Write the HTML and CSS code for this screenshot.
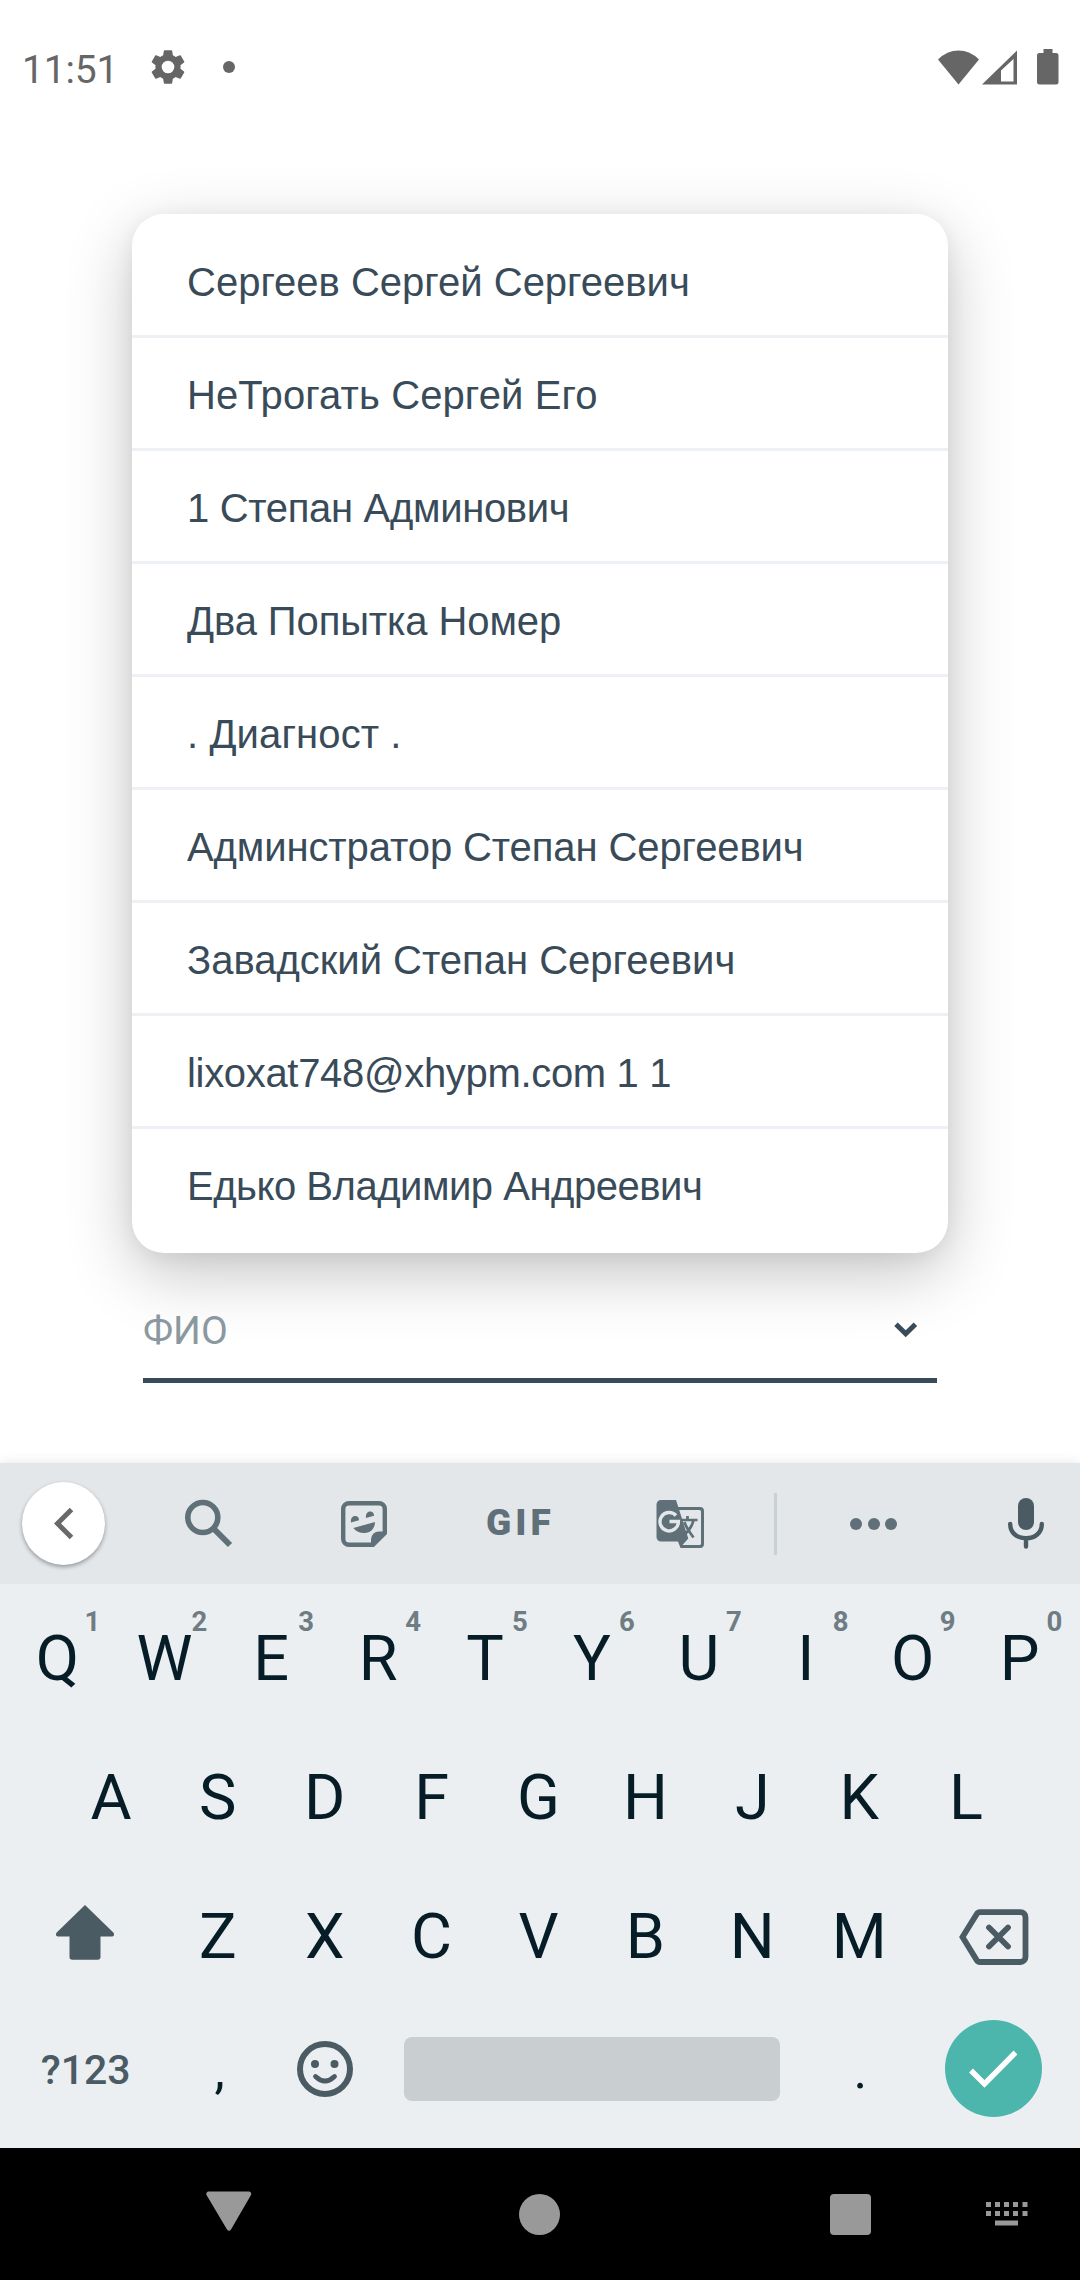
FILE: index.html
```html
<!DOCTYPE html>
<html lang="ru">
<head>
<meta charset="utf-8">
<title>ФИО</title>
<link rel="stylesheet" href="styles.css">
</head>
<body>
<header class="status">
  <span class="clock">11:51</span>
  <svg class="gear" width="42" height="42" viewBox="0 0 24 24"><path d="M19.14 12.94c.04-.3.06-.61.06-.94 0-.32-.02-.64-.07-.94l2.03-1.58a.49.49 0 0 0 .12-.61l-1.92-3.32a.488.488 0 0 0-.59-.22l-2.39.96c-.5-.38-1.03-.7-1.62-.94l-.36-2.54a.484.484 0 0 0-.48-.41h-3.84c-.24 0-.43.17-.47.41l-.36 2.54c-.59.24-1.13.57-1.62.94l-2.39-.96c-.22-.08-.47 0-.59.22L2.74 8.87c-.12.21-.08.47.12.61l2.03 1.58c-.05.3-.09.63-.09.94s.02.64.07.94l-2.03 1.58a.49.49 0 0 0-.12.61l1.92 3.32c.12.22.37.29.59.22l2.39-.96c.5.38 1.03.7 1.62.94l.36 2.54c.05.24.24.41.48.41h3.84c.24 0 .44-.17.47-.41l.36-2.54c.59-.24 1.13-.56 1.62-.94l2.39.96c.22.08.47 0 .59-.22l1.92-3.32c.12-.22.07-.47-.12-.61zM12 15.6A3.6 3.6 0 1 1 12 8.400a3.600 3.600 0 0 1 0 7.200z"/></svg>
  <span class="dot"></span>
  <svg class="wifi" width="42" height="35" viewBox="0 0 42 35"><path d="M0 9.500Q9 .5 20.500 .5T41 9.500L20.500 34.500z"/></svg>
  <svg class="signal" width="36" height="35" viewBox="0 0 36 35"><path fill-rule="evenodd" d="M0 34.500L35 .5v34zM19 20.500V31.500H31.500V9z"/></svg>
  <svg class="battery" width="22" height="36" viewBox="0 0 22 36"><path d="M6.500 0h9v4H19a2.500 2.500 0 0 1 2.500 2.500v26.500a2.500 2.500 0 0 1-2.500 2.500H2.500A2.500 2.500 0 0 1 0 33V6.500A2.500 2.500 0 0 1 2.500 4h4z"/></svg>
</header>

<main class="page">
  <ul class="options">
    <li class="option">Сергеев Сергей Сергеевич</li>
    <li class="option loose">НеТрогать Сергей Его</li>
    <li class="option tight">1 Степан Админович</li>
    <li class="option snug">Два Попытка Номер</li>
    <li class="option loose">. Диагност .</li>
    <li class="option snug">Админстратор Степан Сергеевич</li>
    <li class="option">Завадский Степан Сергеевич</li>
    <li class="option tight">lixoxat748@xhypm.com 1 1</li>
    <li class="option tighter">Едько Владимир Андреевич</li>
  </ul>
  <div class="field">
    <span class="placeholder">ФИО</span>
    <svg class="caret" width="24" height="16" viewBox="0 0 24 16"><path d="M2 2.200l9.700 9.600L21.400 2.200" fill="none" stroke="#394b59" stroke-width="5"/></svg>
  </div>
</main>

<section class="keyboard">
  <div class="tools">
    <span class="back"><svg width="20" height="33" viewBox="0 0 20 33"><path d="M17.500 2.500L3.500 16.500l14 14" fill="none" stroke="#6b6868" stroke-width="5"/></svg></span>
    <svg class="search" width="48" height="49" viewBox="0 0 48 49"><g fill="none" stroke="#5f7078"><circle cx="17.800" cy="18.500" r="15" stroke-width="5.600"/><path d="M28 29L45 46" stroke-width="6"/><path d="M29.500 33.500l3-3" stroke-width="4"/></g></svg>
    <svg class="sticker" width="46" height="46" viewBox="0 0 46 46"><path d="M8 2.200H38a5.800 5.800 0 0 1 5.800 5.800V32L32 43.800H8A5.800 5.800 0 0 1 2.200 38V8A5.800 5.800 0 0 1 8 2.200z" fill="none" stroke="#5f7078" stroke-width="4.400"/><path d="M30 44v-5.500a8 8 0 0 1 8-8h6v2L32.500 44zM10 21.500c-.5-3.500 1-6.500 4-6.500s4 2 4 4.200zM25 17c-.5-3.500 1-6.500 4-6.500s4 2 4 4.200zM12.300 27L34 21c0 6-4 11-10.500 11-5 0-9-2-11.200-5z"/></svg>
    <span class="gif">GIF</span>
    <svg class="translate" width="48" height="48" viewBox="0 0 48 48"><path d="M5 0H20L22.300 7H44a4 4 0 0 1 4 4V44a4 4 0 0 1-4 4H24.500L22 41.500H5A4.500 4.500 0 0 1 .5 37V4.500A4.500 4.500 0 0 1 5 0z"/><path d="M23.200 10H43.500a1.500 1.500 0 0 1 1.500 1.500v32a1.500 1.500 0 0 1-1.500 1.500H26.500l5.800-6.500z" fill="#e3e7ea"/><path d="M26 20H41.500M31.500 16v4M37.500 20c-1.500 7-5 11-8.500 14M28.500 22c1.500 5.500 5 10 9 15.500" fill="none" stroke="#5f7078" stroke-width="2.700"/><path d="M20 15.500A9.200 9.200 0 1 0 22.400 21.500H13.500" fill="none" stroke="#e3e7ea" stroke-width="3.400"/></svg>
    <span class="rule"></span>
    <span class="more"><i></i><i></i><i></i></span>
    <svg class="mic" width="36" height="51" viewBox="0 0 36 51"><rect x="10" y="0" width="16" height="32" rx="8" fill="#4b5b63"/><path d="M2.200 26c0 9 7 14.300 15.800 14.300S33.800 35 33.800 26M18 41v7.500" fill="none" stroke="#4b5b63" stroke-width="4.400" stroke-linecap="round"/></svg>
  </div>
  <div class="keys">
    <div class="row">
      <span class="key">Q<sup>1</sup></span><span class="key">W<sup>2</sup></span><span class="key">E<sup>3</sup></span><span class="key">R<sup>4</sup></span><span class="key">T<sup>5</sup></span><span class="key">Y<sup>6</sup></span><span class="key">U<sup>7</sup></span><span class="key">I<sup>8</sup></span><span class="key">O<sup>9</sup></span><span class="key">P<sup>0</sup></span>
    </div>
    <div class="row">
      <span class="key">A</span><span class="key">S</span><span class="key">D</span><span class="key">F</span><span class="key">G</span><span class="key">H</span><span class="key">J</span><span class="key">K</span><span class="key">L</span>
    </div>
    <div class="row">
      <span class="key wide"><svg class="shift" width="58" height="55" viewBox="0 0 58 55"><path d="M29 0L57.300 27.500c1.500 2 .7 4-1.800 4H44.500V52a2.700 2.700 0 0 1-2.700 2.700H16.200a2.700 2.700 0 0 1-2.700-2.700V31.500H2.500C0 31.500-.8 29.500.7 27.500z"/></svg></span><span class="key">Z</span><span class="key">X</span><span class="key">C</span><span class="key">V</span><span class="key">B</span><span class="key">N</span><span class="key">M</span><span class="key wide"><svg width="70" height="56" viewBox="0 0 70 56"><g fill="none" stroke="#4b5b63" stroke-width="5.800"><path d="M21 3.200H61.500a5 5 0 0 1 5 5V48a5 5 0 0 1-5 5H21a4 4 0 0 1-3.400-2L3.500 28 17.600 5.200A4 4 0 0 1 21 3.200z"/><path d="M30 18.500L49 37.500M49 18.500L30 37.500" stroke-linecap="round"/></g></svg></span>
    </div>
    <div class="row bottom">
      <span class="key wide symbols">?123</span>
      <span class="key punct">,</span>
      <span class="key"><svg width="56" height="56" viewBox="0 0 56 56"><circle cx="28" cy="28" r="25" fill="none" stroke="#4b5b63" stroke-width="6"/><circle cx="18" cy="23" r="4"/><circle cx="37.500" cy="23" r="4"/><path d="M18.500 35.500q9.500 9 19 0" fill="none" stroke="#4b5b63" stroke-width="4.800" stroke-linecap="round"/></svg></span>
      <span class="space"></span>
      <span class="key punct">.</span>
      <span class="key wide"><span class="enter"><svg width="49" height="38" viewBox="0 0 49 38"><path d="M2 20.500L15.500 34 46.500 2.500" fill="none" stroke="#fff" stroke-width="5.400"/></svg></span></span>
    </div>
  </div>
</section>

<nav class="nav">
  <svg class="nav-back" width="46" height="41" viewBox="0 0 46 41"><path d="M3 .5H42.500a2.500 2.500 0 0 1 2.200 4L25 38.500q-2 2.500-4 0L.8 4.500A2.500 2.500 0 0 1 3 .5z"/></svg>
  <span class="home"></span>
  <span class="recent"></span>
  <svg class="ime" width="42" height="24" viewBox="0 0 42 24"><path d="M0 0h5v5H0zM9 0h5v5H9zM18 0h5v5h-5zM27 0h5v5h-5zM36.500 0h5v5h-5zM0 9h5v5H0zM9 9h5v5H9zM18 9h5v5h-5zM27 9h5v5h-5zM36.500 9h5v5h-5zM9 18.500h23v5H9z"/></svg>
</nav>
</body>
</html>
```

FILE: styles.css
```css
* { box-sizing: border-box; }

body {
  margin: 0;
  width: 1080px;
  height: 2280px;
  display: flex;
  flex-direction: column;
  overflow: hidden;
  background: #fff;
  font-family: Roboto, "Noto Sans", sans-serif;
}

svg { display: block; flex: none; }

/* Status bar */
.status {
  display: flex;
  align-items: center;
  height: 134px;
  padding: 0 21px 0 22px;
  color: #666;
  fill: #666;
}
.clock {
  width: 96px;
  font-size: 39px;
  line-height: 40px;
  padding-top: 5px;
  letter-spacing: -.2px;
}
.gear { margin-left: 29px; }
.dot {
  width: 12px;
  height: 12px;
  margin-left: 34px;
  border-radius: 50%;
  background: #666;
}
.wifi { margin-left: auto; }
.signal { margin-left: 2px; }
.battery { margin-left: 19px; }

/* Suggestions and field */
.page {
  height: 1329px;
  padding: 80px 132px 0;
}
.options {
  margin: 0;
  padding: 11px 0 14px;
  list-style: none;
  border-radius: 32px;
  background: #fff;
  box-shadow: 0 20px 66px rgba(0, 0, 0, .23), 0 4px 20px rgba(0, 0, 0, .06);
}
.option {
  padding: 4px 0 0 55px;
  border-bottom: 3px solid #edf1f5;
  color: #394b59;
  font: 40px/106px "Liberation Sans", Arial, sans-serif;
  white-space: nowrap;
}
.option:last-child { border-bottom: 0; }
.loose { letter-spacing: .1px; }
.snug { letter-spacing: -.1px; }
.tight { letter-spacing: -.32px; }
.tighter { letter-spacing: -.47px; }
.field {
  display: flex;
  align-items: center;
  justify-content: space-between;
  height: 100px;
  margin: 30px 11px 0;
  padding: 0 19px 0 0;
  border-bottom: 5px solid #394b59;
}
.placeholder {
  padding-top: 1px;
  color: #8a989f;
  font-size: 39px;
  line-height: 94px;
}
.caret { margin-bottom: 2px; }

/* Keyboard tool strip */
.keyboard {
  height: 685px;
  background: #ebeff2;
  box-shadow: 0 0 12px rgba(0, 0, 0, .1);
}
.tools {
  display: flex;
  align-items: center;
  height: 121px;
  padding-left: 22px;
  background: #e3e7ea;
  fill: #5f7078;
}
.back {
  display: flex;
  align-items: center;
  justify-content: center;
  width: 83px;
  height: 83px;
  margin-bottom: 1px;
  border-radius: 50%;
  background: #fff;
  box-shadow: 0 2px 4px rgba(0, 0, 0, .35);
}
.search { margin-left: 80px; }
.sticker { margin-left: 108px; }
.gif {
  width: 70px;
  margin-left: 99px;
  color: #5f7078;
  font-size: 37px;
  font-weight: 900;
  line-height: 46px;
  padding-bottom: 2px;
  letter-spacing: 4px;
}
.translate { margin-left: 100px; }
.rule {
  width: 3px;
  height: 62px;
  margin-left: 70px;
  background: #cbd0d3;
}
.more {
  display: flex;
  gap: 5.500px;
  margin-left: 73px;
}
.more i {
  width: 12px;
  height: 12px;
  border-radius: 50%;
  background: #5f7078;
}
.mic { margin-left: 111px; }

/* Keys */
.keys { padding-top: 6px; }
.row {
  display: flex;
  justify-content: center;
  height: 138.700px;
}
.key {
  display: flex;
  align-items: center;
  justify-content: center;
  position: relative;
  width: 106.900px;
  height: 138.700px;
  padding-right: 3px;
  color: #061d27;
  fill: #4b5b63;
  font-size: 63px;
  line-height: 70px;
}
.key sup {
  position: absolute;
  left: 79px;
  top: 16px;
  color: #6f7c83;
  font-size: 27.500px;
  font-weight: 700;
  line-height: 32px;
}
.wide { width: 160px; padding-right: 1px; }
.shift { margin-bottom: 8px; }
.bottom {
  align-items: center;
  height: 126px;
}
.bottom .key { height: 126px; }
.bottom .symbols {
  color: #4b5b63;
  font-size: 41px;
  font-weight: 500;
  padding-top: 1px;
}
.bottom .punct { font-size: 52px; padding: 3px 0 0; }
.space {
  width: 376px;
  height: 64px;
  margin: 0 26.500px 0 24.500px;
  border-radius: 8px;
  background: #c9ced1;
}
.enter {
  display: flex;
  align-items: center;
  justify-content: center;
  width: 97px;
  height: 97px;
  margin-bottom: 1px;
  border-radius: 50%;
  background: #4db6ac;
}

/* System navigation */
.nav {
  display: flex;
  align-items: center;
  height: 132px;
  padding-left: 206px;
  background: #000;
  fill: #999;
}
.nav-back { margin-bottom: 6px; }
.home {
  width: 41px;
  height: 41px;
  margin-left: 267px;
  border-radius: 50%;
  background: #999;
}
.recent {
  width: 41px;
  height: 41px;
  margin-left: 270px;
  border-radius: 4px;
  background: #999;
}
.ime { margin-left: 115px; }
```
